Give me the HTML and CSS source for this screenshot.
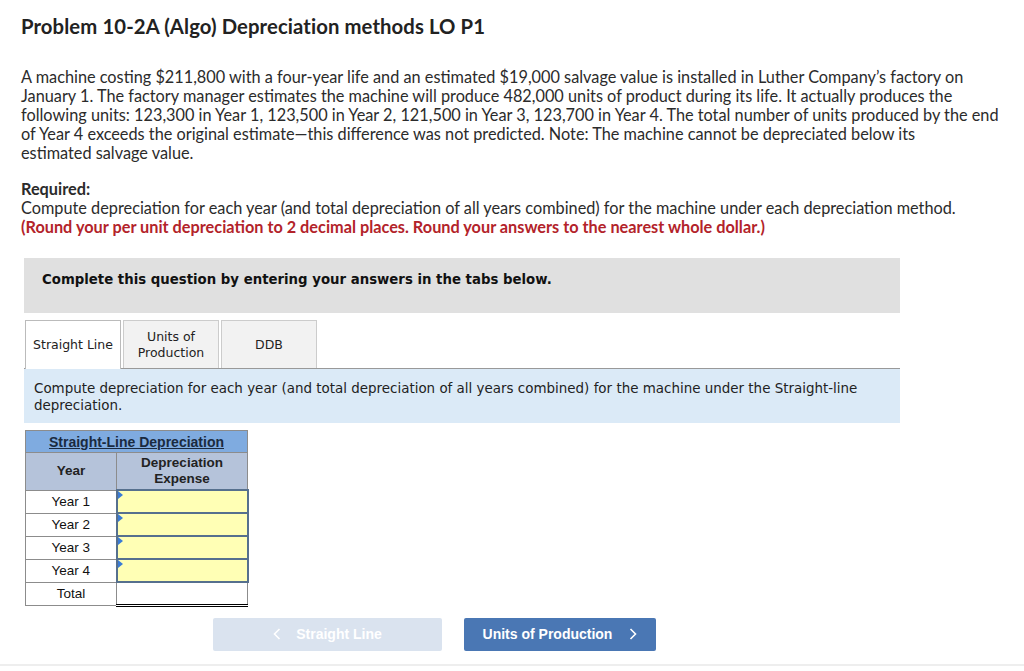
FILE: index.html
```html
<!DOCTYPE html>
<html>
<head>
<meta charset="utf-8">
<link rel="stylesheet" href="styles.css">
</head>
<body>
<div class="page">
  <h1 class="title">Problem 10-2A (Algo) Depreciation methods LO P1</h1>
  <p class="para">A machine costing $211,800 with a four-year life and an estimated $19,000 salvage value is installed in Luther Company’s factory on<br>January 1. The factory manager estimates the machine will produce 482,000 units of product during its life. It actually produces the<br>following units: 123,300 in Year 1, 123,500 in Year 2, 121,500 in Year 3, 123,700 in Year 4. The total number of units produced by the end<br>of Year 4 exceeds the original estimate—this difference was not predicted. Note: The machine cannot be depreciated below its<br>estimated salvage value.</p>
  <div class="required">
    <div class="req-label">Required:</div>
    <div>Compute depreciation for each year (and total depreciation of all years combined) for the machine under each depreciation method.</div>
    <div class="red">(Round your per unit depreciation to 2 decimal places. Round your answers to the nearest whole dollar.)</div>
  </div>
  <div class="panel">
    <div class="complete">Complete this question by entering your answers in the tabs below.</div>
    <div class="tabs">
      <div class="tab active">Straight Line</div>
      <div class="tab">Units of<br>Production</div>
      <div class="tab">DDB</div>
    </div>
    <div class="instr">Compute depreciation for each year (and total depreciation of all years combined) for the machine under the Straight-line depreciation.</div>
    <table class="dep">
      <tr><th colspan="2" class="cap"><u>Straight-Line Depreciation</u></th></tr>
      <tr><th class="hd">Year</th><th class="hd">Depreciation<br>Expense</th></tr>
      <tr><td class="yr">Year 1</td><td class="inp"><span class="tri"></span></td></tr>
      <tr><td class="yr">Year 2</td><td class="inp"><span class="tri"></span></td></tr>
      <tr><td class="yr">Year 3</td><td class="inp"><span class="tri"></span></td></tr>
      <tr><td class="yr">Year 4</td><td class="inp"><span class="tri"></span></td></tr>
      <tr><td class="yr">Total</td><td class="tot"></td></tr>
    </table>
    <div class="nav">
      <button class="btn prev"><svg class="chev l" width="8" height="12" viewBox="0 0 8 12"><path d="M6.5 1 L1.5 6 L6.5 11" fill="none" stroke="#fff" stroke-width="1.6"/></svg>Straight Line</button>
      <button class="btn next">Units of Production<svg class="chev r" width="8" height="12" viewBox="0 0 8 12"><path d="M1.5 1 L6.5 6 L1.5 11" fill="none" stroke="#fff" stroke-width="1.6"/></svg></button>
    </div>
  </div>
</div>
<div class="bottomline"></div>
</body>
</html>
```
FILE: styles.css
```css
html, body { margin: 0; padding: 0; background: #fff; }
body { font-family: "Lato", "Liberation Sans", sans-serif; color: #222; }
.page { padding: 14px 0 0 21px; width: 985px; }
.title { font-size: 20.3px; font-weight: 700; margin: 0; line-height: 24px; color: #222; letter-spacing: 0.1px; }
.para { font-size: 16.3px; line-height: 19px; margin: 29px 0 0; width: 990px; color: #2b2b2b; white-space: nowrap; }
.required { font-size: 16.3px; line-height: 19px; margin-top: 17px; color: #2b2b2b; }
.req-label { font-weight: 700; }
.red { color: #b3232a; font-weight: 700; }
.panel { margin-top: 22px; margin-left: 3px; width: 876px; font-family: "DejaVu Sans", Verdana, sans-serif; }
.complete { background: #e0e0e0; height: 55px; box-sizing: border-box; padding: 14px 0 0 18px; font-weight: 700; font-size: 13.3px; color: #111; }
.tabs { display: flex; gap: 2px; margin-top: 7px; padding-left: 1px; border-bottom: 1px solid #999; height: 48px; }
.tab { width: 96px; box-sizing: border-box; border: 1px solid #ccc; border-bottom: none; background: #f2f2f2; font-size: 12.5px; color: #222; display: flex; align-items: center; justify-content: center; text-align: center; line-height: 16px; }
.tab.active { background: #fff; border-color: #bbb; height: 49px; margin-bottom: -1px; }
.instr { background: #dbeaf7; height: 54px; box-sizing: border-box; padding: 11px 10px 0 10px; font-size: 13.45px; line-height: 17px; color: #222; }
.dep { border-collapse: collapse; margin-top: 7px; margin-left: 1px; font-family: "Liberation Sans", Arial, sans-serif; font-size: 13px; }
.dep th, .dep td { border: 1px solid #8c8c8c; padding: 0; }
.cap { background: #7fabe0; height: 21px; font-size: 14px; font-weight: 700; color: #1a2a40; }
.hd { background: #b5c3da; height: 36px; font-size: 13.5px; font-weight: 700; color: #222; line-height: 16px; }
.dep th.hd:first-child { width: 90px; }
.dep th.hd:last-child { width: 130px; }
.yr { text-align: center; height: 22px; color: #111; font-size: 13.5px; }
.inp { background: #ffffb5; position: relative; border: 2px solid #56708e !important; }
.tri { position: absolute; left: 0; top: 0; width: 0; height: 0; border-top: 4px solid transparent; border-bottom: 4px solid transparent; border-left: 5px solid #3a7bd5; }
.tot { border-bottom: 3px double #000 !important; background: #fff; }
.nav { display: flex; gap: 22px; margin-top: 11px; padding-left: 189px; }
.btn { height: 33px; border: none; border-radius: 2px; font-family: "Liberation Sans", Arial, sans-serif; font-size: 14px; font-weight: 700; color: #fff; display: flex; align-items: center; justify-content: center; padding: 0; }
.prev { width: 229px; background: #dae3ef; }
.next { width: 192px; background: #4a77b4; }
.chev.l { margin-right: 15px; }
.chev.r { margin-left: 17px; }
.bottomline { position: absolute; left: 0; top: 664px; width: 1024px; height: 2px; background: #eee; }
```
